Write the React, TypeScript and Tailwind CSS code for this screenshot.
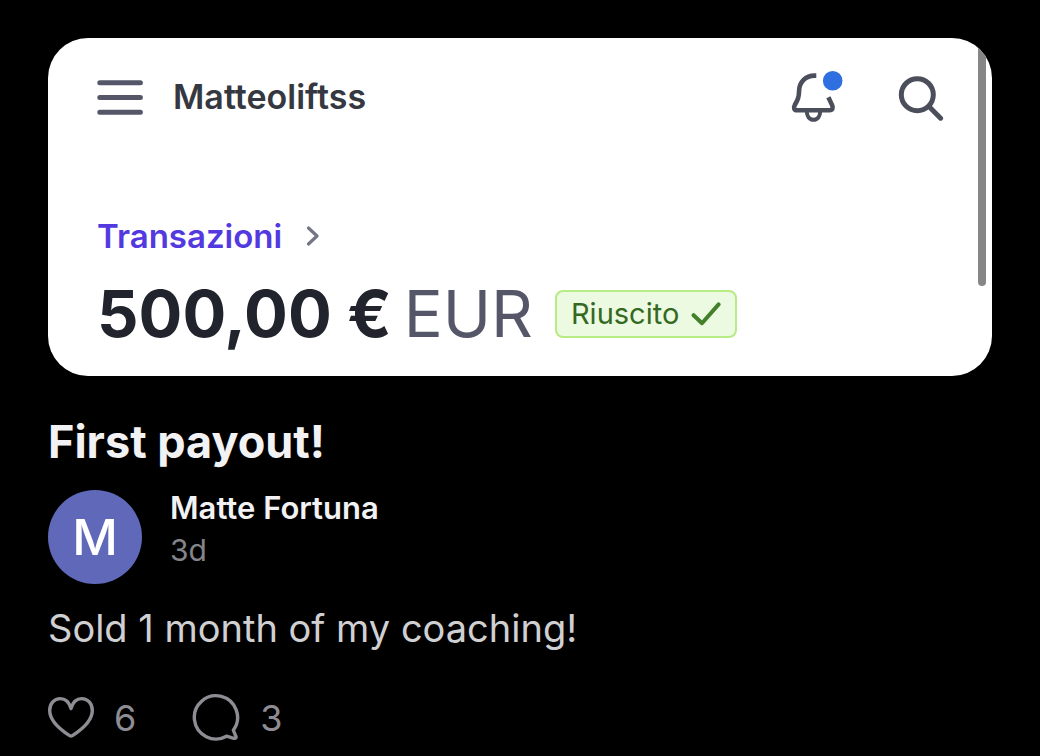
import type { ReactNode } from "react";

function MenuIcon() {
  return (
    <svg width="46" height="40" viewBox="0 0 46 40" fill="none" stroke="#555769" strokeWidth="5" strokeLinecap="round">
      <path d="M2.8 5.8H43.4M2.8 20.5H43.4M2.8 35.3H43.4" />
    </svg>
  );
}

function BellIcon() {
  return (
    <svg width="56" height="54" viewBox="0 0 56 54" fill="none" stroke="#4b4f5b" strokeWidth="4.6">
      <path
        d="M26.3 5.6H24.5C15.5 5.6 9.5 12 9.1 20.5C8.9 27.5 8 29.5 4.8 35C3.2 38 4.3 40.3 7 40.3H39.6C42.5 40.3 43.3 38 42.2 35.4L38.4 27.2"
        strokeLinejoin="round"
      />
      <path d="M16.8 41C16.8 46.5 19.5 49.8 23.5 49.8S30.2 46.5 30.2 41" strokeWidth="4" />
      <circle cx="42.7" cy="10.7" r="9.8" fill="#2f6fe0" stroke="none" />
    </svg>
  );
}

function SearchIcon() {
  return (
    <svg width="48" height="50" viewBox="0 0 48 50" fill="none" stroke="#4b4f5b" strokeWidth="5" strokeLinecap="round">
      <circle cx="21.3" cy="22.7" r="16" />
      <path d="M33 34.6L44.6 46.2" />
    </svg>
  );
}

function ChevronIcon() {
  return (
    <svg width="14" height="20" viewBox="0 0 14 20" fill="none" stroke="#747884" strokeWidth="3.2" strokeLinecap="round" strokeLinejoin="round">
      <path d="M2.5 2L11 10L2.5 18" />
    </svg>
  );
}

function CheckIcon() {
  return (
    <svg width="30" height="24" viewBox="0 0 30 24" fill="none" stroke="#43802a" strokeWidth="4" strokeLinecap="round" strokeLinejoin="round">
      <path d="M2.6 13.2L11 21.2L27.6 2.4" />
    </svg>
  );
}

function HeartIcon() {
  return (
    <svg width="46" height="48" viewBox="2 0 46 48" fill="none" stroke="#8e8d93" strokeWidth="3.4" strokeLinejoin="round">
      <path d="M25 14.5C23.2 8.2 19 4.6 14.3 4.6C8.2 4.6 3.7 9.6 3.7 16.5C3.7 26 12.5 34.5 23.6 41.6Q25 42.5 26.4 41.6C37.5 34.5 46.3 26 46.3 16.5C46.3 9.6 41.8 4.6 35.7 4.6C31 4.6 26.8 8.2 25 14.5Z" />
    </svg>
  );
}

function CommentIcon() {
  return (
    <svg width="48" height="52" viewBox="2 0 48 52" fill="none" stroke="#8e8d93" strokeWidth="3.4" strokeLinejoin="round">
      <path d="M43.3 38.2A21.6 21.6 0 1 0 36.5 44.2L43.8 46.3Q46.6 46.9 45.9 44.3Z" />
    </svg>
  );
}

function Action({ label, count, children }: { label: string; count: number; children: ReactNode }) {
  return (
    <button type="button" aria-label={`${label} ${count}`} className="flex items-center gap-5 text-4xl text-[#8e8d93]">
      {children}
      <span>{count}</span>
    </button>
  );
}

export default function App() {
  return (
    <main className="min-h-screen bg-black px-12 pt-[38px] font-['Inter',sans-serif]">
      {/* Payment card */}
      <section className="relative overflow-hidden rounded-[40px] bg-white pt-[34px] pr-12 pb-[22px] pl-[49px]">
        <header className="flex h-[50px] items-center justify-between">
          <div className="flex items-center gap-[30px]">
            <button type="button" aria-label="Menu">
              <MenuIcon />
            </button>
            <p className="text-[34px] leading-10 font-semibold text-[#353841]">Matteoliftss</p>
          </div>
          <div className="flex items-center gap-[50px]">
            <button type="button" aria-label="Notifiche">
              <BellIcon />
            </button>
            <button type="button" aria-label="Cerca">
              <SearchIcon />
            </button>
          </div>
        </header>

        <a href="#transazioni" className="mt-[94px] flex items-center gap-6 text-[33px] leading-10 font-semibold text-[#533ae0]">
          Transazioni
          <ChevronIcon />
        </a>

        <div className="mt-[18px] flex items-center text-[65px] leading-[80px]">
          <p className="font-bold text-[#21242c]">500,00 €</p>
          <p className="ml-3 text-[#555769]">EUR</p>
          <span className="ml-[22px] flex h-12 items-center gap-3 rounded-lg border-2 border-[#b7eb84] bg-[#ebfae0] px-[14px] text-[29px] text-[#35691f]">
            Riuscito
            <CheckIcon />
          </span>
        </div>

        {/* Scroll thumb */}
        <div className="absolute top-0 right-[6px] h-[248px] w-2 rounded-b-full bg-[#868686]" />
      </section>

      {/* Post */}
      <article>
        <h1 className="mt-[38px] text-[45px] leading-[56px] font-bold text-[#f2f2f4]">First payout!</h1>
        <div className="mt-5 flex gap-7">
          <div className="flex size-[94px] items-center justify-center rounded-full bg-[#6069b9] text-[50px] font-medium text-white">
            M
          </div>
          <div>
            <p className="text-[31px] leading-9 font-semibold text-[#f2f2f4]">Matte Fortuna</p>
            <p className="mt-1 text-[30px] leading-10 text-[#85848a]">3d</p>
          </div>
        </div>
        <p className="mt-5 text-[38px] leading-[48px] text-[#d0d0d3]">Sold 1 month of my coaching!</p>
        <div className="mt-10 flex items-center gap-14">
          <Action label="Mi piace" count={6}>
            <HeartIcon />
          </Action>
          <Action label="Commenti" count={3}>
            <CommentIcon />
          </Action>
        </div>
      </article>
    </main>
  );
}
